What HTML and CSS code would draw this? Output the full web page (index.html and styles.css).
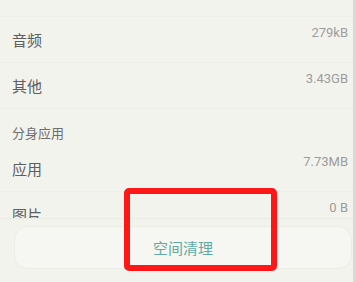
FILE: index.html
```html
<!DOCTYPE html>
<html lang="zh-CN">
<head>
    <meta charset="UTF-8">
    <meta name="viewport" content="width=device-width, initial-scale=1.0">
    <title>存储空间</title>
    <link rel="stylesheet" href="styles.css">
</head>
<body>
    <div class="screen">
        <div class="top-rest"></div>

        <div class="row">
            <span class="label">音频</span>
            <span class="value">279kB</span>
        </div>
        <div class="row">
            <span class="label">其他</span>
            <span class="value">3.43GB</span>
        </div>

        <div class="section-title">分身应用</div>

        <div class="row">
            <span class="label">应用</span>
            <span class="value">7.73MB</span>
        </div>
        <div class="row">
            <span class="label">图片</span>
            <span class="value">0 B</span>
        </div>

        <div class="bottom-bar">
            <button class="clean-button">空间清理</button>
        </div>

        <div class="highlight"></div>
    </div>
</body>
</html>
```

FILE: styles.css
```css
body {
    margin: 0;
    background: #f2f2ed;
    font-family: "Noto Sans CJK SC", "Noto Sans", sans-serif;
}

.screen {
    position: relative;
    width: 353px;
    height: 282px;
    overflow: hidden;
    background: #f3f3ee;
    border-right: 3px solid #dadad5;
}

.top-rest {
    height: 16px;
    border-bottom: 1px solid #eeeee9;
}

.row {
    display: flex;
    justify-content: space-between;
    align-items: flex-start;
    height: 46px;
    padding: 0 5px 0 12px;
    box-sizing: border-box;
    border-bottom: 1px solid #efefea;
}

.label {
    padding-top: 14px;
    font-size: 15px;
    line-height: 18px;
    color: #5e5e5e;
}

.value {
    padding-top: 8px;
    font-family: Roboto, "Liberation Sans", sans-serif;
    font-size: 13px;
    line-height: 15px;
    color: #9c9c9c;
}

.section-title {
    height: 37px;
    padding: 16px 0 0 12px;
    box-sizing: border-box;
    font-size: 13px;
    line-height: 15px;
    color: #6e6e6e;
}

.bottom-bar {
    position: absolute;
    left: 0;
    right: 0;
    top: 218px;
    bottom: 0;
    padding: 7px 1px 0 14px;
    background: #f3f3ee;
    border-top: 1px solid #ebebe6;
}

.clean-button {
    display: block;
    width: 100%;
    height: 43px;
    border: 1px solid #ededE8;
    border-radius: 14px;
    background: #f6f6f2;
    font-family: "Noto Sans CJK SC", sans-serif;
    font-size: 15px;
    color: #62aba3;
    cursor: pointer;
}

.highlight {
    position: absolute;
    left: 124px;
    top: 188px;
    width: 153px;
    height: 83px;
    box-sizing: border-box;
    border: 6px solid #ff1616;
    border-radius: 5px;
}
```
